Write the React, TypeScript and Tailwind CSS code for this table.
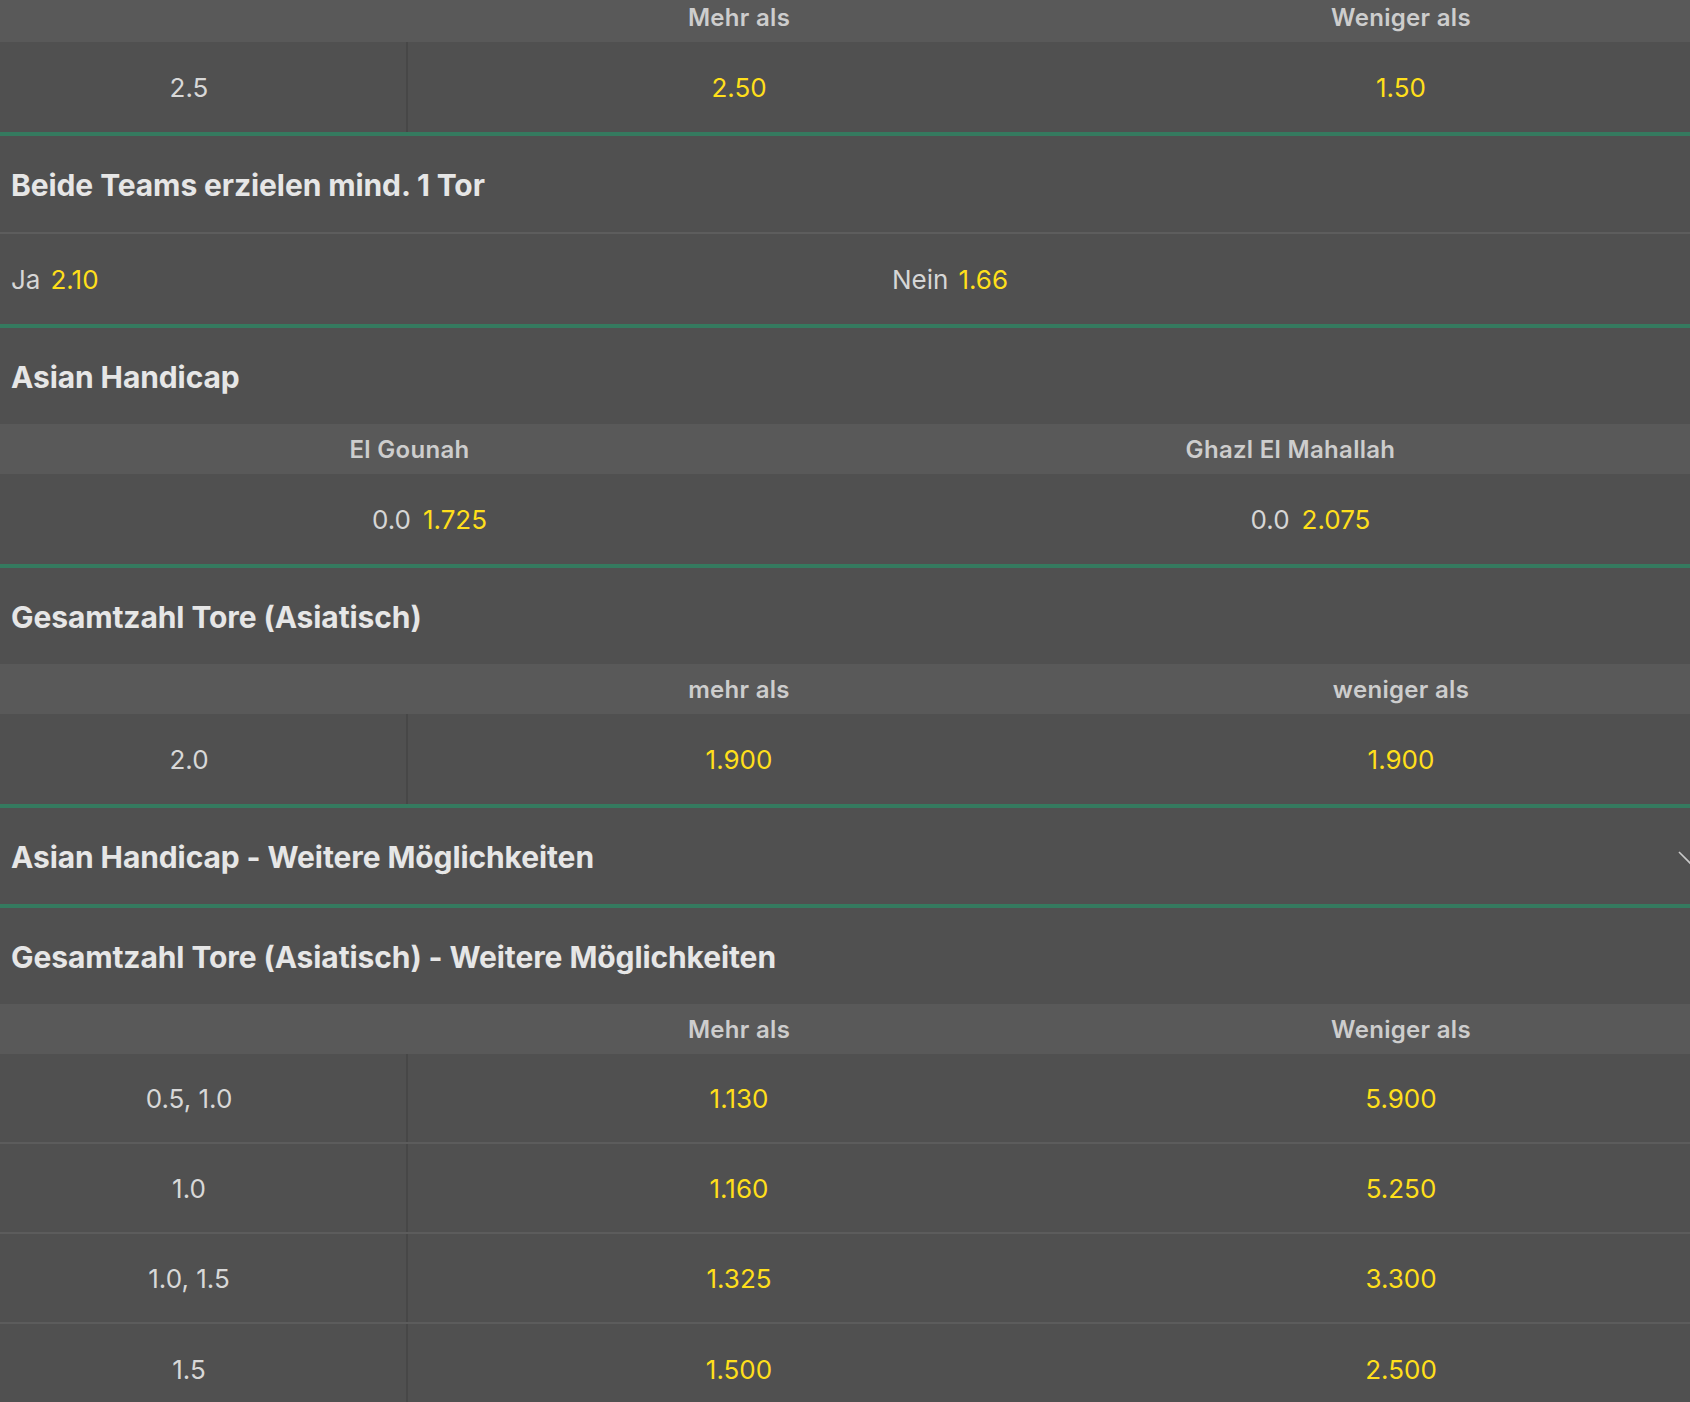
import { Fragment } from 'react';

const FONT = "font-['Inter','Noto_Sans',sans-serif]";

type OURow = { line: string; over: string; under: string };

function Green() {
  return <div className="h-[4px] bg-[#357a5f]" />;
}

function Title({ text, chevron }: { text: string; chevron?: boolean }) {
  return (
    <div className="h-[96px] flex items-center justify-between pl-[11px] pr-[54px] pt-[3px]">
      <span className="text-[30px] font-bold tracking-[-0.1px] text-[#e6e6e6]">{text}</span>
      {chevron && (
        <svg width="30" height="16" viewBox="0 0 30 16" fill="none" className="mt-[3px]">
          <polyline points="1,1 15,15 29,1" stroke="#c9c9c9" strokeWidth="1.6" />
        </svg>
      )}
    </div>
  );
}

function OverUnder({ head, rows, cropTop }: { head: [string, string]; rows: OURow[]; cropTop?: boolean }) {
  return (
    <div>
      <div className={`h-[50px] pt-[2px] bg-[#595959] grid grid-cols-[408px_662px_662px] items-center text-[24px] font-semibold tracking-[0.3px] text-[#cdcdcd] ${cropTop ? '-mt-[8px]' : ''}`}>
        <span />
        <span className="text-center">{head[0]}</span>
        <span className="text-center">{head[1]}</span>
      </div>
      {rows.map((r, i) => (
        <div
          key={r.line}
          className={`grid grid-cols-[408px_662px_662px] text-[26px] ${rows.length > 1 && i < rows.length - 1 ? 'h-[90px] border-b-2 border-[#5c5c5c]' : 'h-[90px]'}`}
        >
          <div className="flex items-center justify-center pr-[28px] text-[#d8d8d8] border-r-2 border-[#474747]">{r.line}</div>
          <div className="flex items-center justify-center text-[#ffdf1b]">{r.over}</div>
          <div className="flex items-center justify-center text-[#ffdf1b]">{r.under}</div>
        </div>
      ))}
    </div>
  );
}

const MORE_LINES: OURow[] = [
  { line: '0.5, 1.0', over: '1.130', under: '5.900' },
  { line: '1.0', over: '1.160', under: '5.250' },
  { line: '1.0, 1.5', over: '1.325', under: '3.300' },
  { line: '1.5', over: '1.500', under: '2.500' },
];

export default function App() {
  return (
    <div className={`w-[1690px] h-[1402px] overflow-hidden bg-[#505050] ${FONT}`}>
      <div className="w-[1762px]">
        <OverUnder cropTop head={['Mehr als', 'Weniger als']} rows={[{ line: '2.5', over: '2.50', under: '1.50' }]} />
        <Green />

        <Title text="Beide Teams erzielen mind. 1 Tor" />
        <div className="h-[2px] bg-[#5d5d5d]" />
        <div className="h-[90px] grid grid-cols-2 text-[26px]">
          {[['Ja', '2.10'], ['Nein', '1.66']].map(([label, odd]) => (
            <div key={label} className="flex items-center gap-[10px] pl-[11px]">
              <span className="text-[#d6d6d6]">{label}</span>
              <span className="text-[#ffdf1b]">{odd}</span>
            </div>
          ))}
        </div>
        <Green />

        <Title text="Asian Handicap" />
        <div className="h-[50px] pt-[2px] bg-[#595959] grid grid-cols-2 items-center text-[24px] font-semibold tracking-[0.3px] text-[#cdcdcd]">
          <span className="text-center pr-[62px]">El Gounah</span>
          <span className="text-center pr-[62px]">Ghazl El Mahallah</span>
        </div>
        <div className="h-[90px] grid grid-cols-2 text-[26px]">
          {[['0.0', '1.725'], ['0.0', '2.075']].map(([hc, odd], i) => (
            <Fragment key={i}>
              <div className="flex items-center justify-center gap-[12px] pr-[22px]">
                <span className="text-[#d6d6d6]">{hc}</span>
                <span className="text-[#ffdf1b]">{odd}</span>
              </div>
            </Fragment>
          ))}
        </div>
        <Green />

        <Title text="Gesamtzahl Tore (Asiatisch)" />
        <OverUnder head={['mehr als', 'weniger als']} rows={[{ line: '2.0', over: '1.900', under: '1.900' }]} />
        <Green />

        <Title text="Asian Handicap - Weitere Möglichkeiten" chevron />
        <Green />

        <Title text="Gesamtzahl Tore (Asiatisch) - Weitere Möglichkeiten" />
        <OverUnder head={['Mehr als', 'Weniger als']} rows={MORE_LINES} />
      </div>
    </div>
  );
}
